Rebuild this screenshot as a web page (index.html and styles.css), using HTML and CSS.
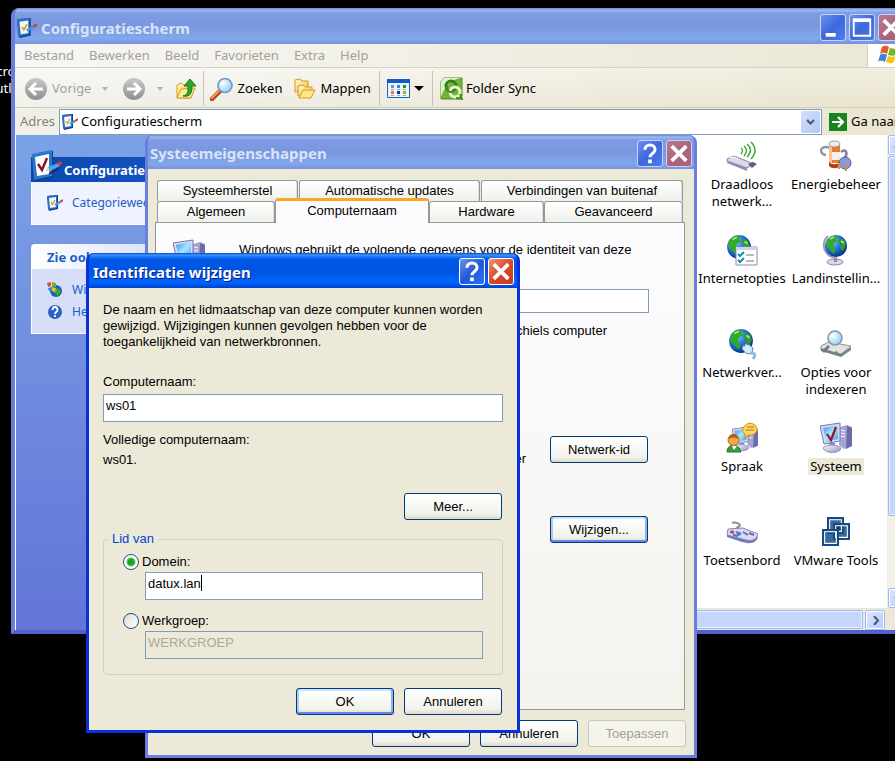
FILE: index.html
```html
<!DOCTYPE html>
<html lang="nl">
<head>
<meta charset="utf-8">
<title>Configuratiescherm</title>
<link rel="stylesheet" href="styles.css">
</head>
<body>
<svg class="defs" aria-hidden="true">
  <defs>
    <linearGradient id="screen" x1="0" y1="0" x2="1" y2="1"><stop offset="0" stop-color="#2f8fe8"/><stop offset=".5" stop-color="#a9e6ff"/><stop offset="1" stop-color="#3a9cf0"/></linearGradient>
    <linearGradient id="metal" x1="0" y1="0" x2="1" y2="1"><stop offset="0" stop-color="#fff"/><stop offset="1" stop-color="#8f8fc0"/></linearGradient>
    <linearGradient id="grey" x1="0" y1="0" x2="0" y2="1"><stop offset="0" stop-color="#c9c9c9"/><stop offset="1" stop-color="#8f8f8f"/></linearGradient>
    <linearGradient id="folder" x1="0" y1="0" x2="1" y2="1"><stop offset="0" stop-color="#fffbd0"/><stop offset="1" stop-color="#f2bf35"/></linearGradient>
    <radialGradient id="ocean" cx=".35" cy=".3" r=".8"><stop offset="0" stop-color="#7cc9ff"/><stop offset=".5" stop-color="#1c6fd8"/><stop offset="1" stop-color="#06246e"/></radialGradient>
    <radialGradient id="lens" cx=".35" cy=".35" r=".7"><stop offset="0" stop-color="#fff"/><stop offset="1" stop-color="#8fcdf5"/></radialGradient>
    <symbol id="panel" viewBox="0 0 32 32">
      <path d="M2 5 22 1v26L4 31z" fill="#0d3f82"/><path d="M1 4 21 0v26L3 30z" fill="#2d77c8"/><path d="M4 7l14-3v20L6 26z" fill="#fff"/>
      <path d="M7 14l4 6 5-12" fill="none" stroke="#8a1020" stroke-width="2.4"/>
      <path d="M15 21l2-4 10-4 2 3-10 5z" fill="#4aa3ee"/><path d="M26 13l4-2 1 3-3 2z" fill="#e33b25"/><path d="M15 21l2-4 2 4z" fill="#f6d796"/><path d="M18 24l10-6" stroke="#123" stroke-width="1.2"/>
    </symbol>
    <symbol id="panel-small" viewBox="0 0 16 16">
      <path d="M0 1l11-1v14L2 16z" fill="#0d3f82"/><path d="M0 1l10-1v13L1 15z" fill="#2d6fc0"/><path d="M2 3l7-1v10l-6 1z" fill="#f4f9ff"/><path d="M4 7l1.500 2.500L8 5" fill="none" stroke="#d8a21c" stroke-width="1.300"/>
      <path d="M8 10l5-3" stroke="#3f97e6" stroke-width="2.4"/><path d="M13 7l3-2" stroke="#c2452a" stroke-width="2"/>
    </symbol>
    <symbol id="globe" viewBox="0 0 24 24">
      <circle cx="12" cy="12" r="11" fill="url(#ocean)"/>
      <path d="M3 6c3-4 8-5 10-4l-1 3 2 2-4 2-1 3 3 3-2 5-4-4-4-4z" fill="#36a82a"/><path d="M16 4l4 2 2 5-3 6-3-3 1-4-3-2z" fill="#2f9c2b"/><path d="M6 5l4-2M17 7l3 2" stroke="#a5ea6b" stroke-width="1.6"/>
    </symbol>
    <symbol id="computer" viewBox="0 0 32 32">
      <path d="M20 5l7-2 5 2v19l-8 3-5-4z" fill="#a5a5d4"/><path d="M27 4l5 2v18l-6 3z" fill="#6c6ca8"/><path d="M21 8l4 1M21 11l4 1M21 14l4 1" stroke="#fff"/>
      <path d="M0 4l20-3v18L4 22z" fill="#d9d9f2" stroke="#7777aa"/><path d="M3 6l15-3v14L6 20z" fill="url(#screen)"/>
      <path d="M9 21h6v5H9z" fill="#8c8cc0"/><path d="M3 26c4-4 14-4 18 0-1 6-16 6-18 0z" fill="url(#metal)" stroke="#9292bb"/>
    </symbol>
    <symbol id="magnifier" viewBox="0 0 24 24">
      <path d="M2 22l8-8" stroke="#a7401e" stroke-width="4.5" stroke-linecap="round"/><path d="M2 21l7-7" stroke="#ff9447" stroke-width="2.2" stroke-linecap="round"/>
      <circle cx="15" cy="8.500" r="7" fill="url(#lens)" stroke="#6c97cf" stroke-width="1.6"/>
    </symbol>
    <symbol id="help-mark" viewBox="0 0 24 24"><path d="M6.500 8c0-7 11-7 11 0 0 4-5.500 4-5.500 8" fill="none" stroke="#fff" stroke-width="3.400"/><path d="M10 18.500h4v4h-4z" fill="#fff"/></symbol>
    <symbol id="close-mark" viewBox="0 0 24 24"><path d="M4 4l16 16M20 4L4 20" stroke="#fff" stroke-width="4"/></symbol>
    <symbol id="vm-square" viewBox="0 0 16 16"><path d="M1 1h14v14H1z" fill="none" stroke="#1c4a7c" stroke-width="2"/><path d="M2.500 2.500h11v11h-11z" fill="none" stroke="#fff"/></symbol>
  </defs>
</svg>

<div class="shortcut">Microsoft<br>Outlook</div>

<section class="window explorer" aria-label="Configuratiescherm">
  <header class="titlebar">
    <svg class="title-icon"><use href="#panel-small"/></svg>
    <h1>Configuratiescherm</h1>
    <button class="cap" aria-label="Minimaliseren"><svg viewBox="0 0 24 24"><path d="M4 18h11v4H4z" fill="#fff"/></svg></button>
    <button class="cap" aria-label="Maximaliseren"><svg viewBox="0 0 24 24"><path d="M2 2h20v20H2zM4 6v14h16V6z" fill="#fff" fill-rule="evenodd"/></svg></button>
    <button class="cap close" aria-label="Sluiten"><svg><use href="#close-mark"/></svg></button>
  </header>
  <div class="menurow">
    <nav class="menu"><button>Bestand</button><button>Bewerken</button><button>Beeld</button><button>Favorieten</button><button>Extra</button><button>Help</button></nav>
    <div class="flag"><svg viewBox="0 0 22 20"><path d="M5 2c3-2 5-1 7 0l-2 7c-2-1-4-2-7 0z" fill="#ee5a24"/><path d="M13 3c3 1 5 1 8 0l-2 7c-3 1-5 1-8 0z" fill="#74b62a"/><path d="M3 10c2-2 5-1 7 0l-2 7c-2-1-5-2-7 0z" fill="#3c86dc"/><path d="M11 11c3 1 5 1 7 0l-1 6c-3 2-6 1-8 0z" fill="#f8c21c"/></svg></div>
  </div>
  <div class="toolbar">
    <button class="tool off back"><svg class="i24" viewBox="0 0 24 24"><circle cx="12" cy="12" r="11" fill="url(#grey)"/><path d="M19 12H7M12 6l-6 6 6 6" fill="none" stroke="#fff" stroke-width="3"/></svg><span>Vorige</span><i class="arrow"></i></button>
    <button class="tool off forward" aria-label="Volgende"><svg class="i24" viewBox="0 0 24 24"><circle cx="12" cy="12" r="11" fill="url(#grey)"/><path d="M5 12h12M12 6l6 6-6 6" fill="none" stroke="#fff" stroke-width="3"/></svg><i class="arrow"></i></button>
    <button class="tool up" aria-label="Omhoog"><svg class="i22" viewBox="0 0 22 22"><path d="M2 7l4-2 3 2 6-1v14H2z" fill="url(#folder)" stroke="#d49c22"/><path d="M2 20l4-9 14-1-4 10z" fill="#ffe995" stroke="#d49c22"/><path d="M8 18c5-1 5-4 5-10H9l6-7 6 7h-4c0 8-2 11-9 10z" fill="#2da52b" stroke="#13801a"/></svg></button>
    <span class="rule"></span>
    <button class="tool search"><svg class="i24"><use href="#magnifier"/></svg><span>Zoeken</span></button>
    <button class="tool folders"><svg class="i22" viewBox="0 0 22 22"><path d="M1 2l5-1 2 2h6v11H1z" fill="url(#folder)" stroke="#d49c22"/><path d="M4 8l5-1 2 2h7v9H4z" fill="url(#folder)" stroke="#d49c22"/><path d="M5 20l4-8h12l-4 8z" fill="#ffe684" stroke="#d49c22"/></svg><span>Mappen</span></button>
    <span class="rule wide"></span>
    <button class="tool views" aria-label="Weergaven"><svg class="i23" viewBox="0 0 23 19"><path d="M.5.5h22v18H.5z" fill="#eaf4ff" stroke="#1665bf"/><path d="M0 0h23v4H0z" fill="#0c5dc6"/><path d="M4 6h3v3H4z" fill="#8f83bd"/><path d="M10 6h3v3h-3z" fill="#2386ec"/><path d="M16 6h3v3h-3z" fill="#16991d"/><path d="M4 12h3v3H4z" fill="#ff6e43"/><path d="M10 12h3v3h-3z" fill="#1138a0"/><path d="M16 12h3v3h-3z" fill="#d5a100"/><path d="M4 10.500h3M10 10.500h3M16 10.500h3M4 16.500h3M10 16.500h3M16 16.500h3" stroke="#9aa"/></svg><i class="arrow dark"></i></button>
    <span class="rule wide"></span>
    <button class="tool sync"><svg class="i23" viewBox="0 0 23 23"><path d="M1 4l3-3h18v18l-3 3H1z" fill="#77b237" stroke="#4d8d1b"/><path d="M1 20V4l3-3h17c-9 2-15 5-20 19z" fill="#e3f2cc"/><circle cx="11" cy="9" r="5" fill="none" stroke="#2f7f1c" stroke-width="3"/><circle cx="15" cy="15" r="5" fill="none" stroke="#e9f6d6" stroke-width="3"/><path d="M6 10a5 5 0 0 0 9 3M20 17l2 5-6-1" fill="none" stroke="#3f8f22" stroke-width="2"/></svg><span>Folder Sync</span></button>
  </div>
  <div class="address">
    <label for="adres">Adres</label>
    <div class="combo"><svg class="i16"><use href="#panel-small"/></svg><input id="adres" value="Configuratiescherm"><button class="drop" aria-label="Adreslijst"><svg viewBox="0 0 9 6"><path d="M1 1l3.500 3.500L8 1" fill="none" stroke="#41587f" stroke-width="2"/></svg></button></div>
    <button class="go"><svg viewBox="0 0 18 18"><path d="M0 0h18v18H0z" fill="#168521"/><path d="M3 9h10M9 4l5 5-5 5" fill="none" stroke="#fff" stroke-width="2.200"/></svg><span>Ga naar</span></button>
  </div>
  <div class="content">
    <aside class="tasks">
      <div class="task primary">
        <h2><svg class="i32"><use href="#panel"/></svg>Configuratiescherm</h2>
        <ul><li><svg class="i16"><use href="#panel-small"/></svg><a href="#">Categorieweergave</a></li></ul>
      </div>
      <div class="task">
        <h2>Zie ook</h2>
        <ul>
          <li><svg class="i16" viewBox="0 0 16 16"><circle cx="9" cy="9" r="6" fill="#1761c8"/><path d="M6 9l4-3 4 3-3 5z" fill="#3aab2b"/><path d="M0 1l4-1v4L1 5z" fill="#e64d20"/><path d="M5 0l4 1v4L5 4z" fill="#72b52b"/><path d="M1 6l4-1v4L2 9z" fill="#3686de"/><path d="M5 5l4 1-1 4-3-1z" fill="#f7bf16"/></svg><a href="#">Windows</a></li>
          <li><svg class="i16" viewBox="0 0 16 16"><circle cx="8" cy="8" r="7.500" fill="#2c62c8" stroke="#dce6f8"/><path d="M5.500 6c0-4 5-4 5 0 0 2-2.500 2-2.500 4M8 11v2" fill="none" stroke="#fff" stroke-width="1.800"/></svg><a href="#">Help</a></li>
        </ul>
      </div>
    </aside>
    <ul class="icons">
      <li><svg viewBox="0 0 32 32"><path d="M1 19l7-3 20 8-7 4-20-7z" fill="#dadaeb" stroke="#8888a6"/><path d="M1 21l20 7v3L1 23z" fill="#8f8fb2"/><path d="M22 24l5-2 4 2-5 4z" fill="#5f5f86"/><path d="M4 18l4-1 4 2" fill="none" stroke="#fff"/><path d="M15 8q3 2 0 6M18 6q5 4 0 10M21 4q7 6 0 13M25 2q8 8 0 17" fill="none" stroke="#3ba82b" stroke-width="1.400"/></svg><span>Draadloos netwerk...</span></li>
      <li><svg viewBox="0 0 32 32"><path d="M10 8C0 4-2 14 6 15" fill="none" stroke="#9292a6" stroke-width="2.500"/><path d="M9 4h11v19H9z" fill="#e87a2c"/><path d="M9 12h11v8H9z" fill="#f5f0ec"/><path d="M9 4h3v19H9z" fill="#ffc38a"/><ellipse cx="14.500" cy="4" rx="5.500" ry="3" fill="#eee" stroke="#999"/><path d="M9 22c3 3 8 3 11 0v4c-3 3-8 3-11 0z" fill="#b63b16"/><path d="M21 12c5-4 7 1 4 6" fill="none" stroke="#8181a8" stroke-width="2.500"/><circle cx="25" cy="23" r="6" fill="#8c98d8" stroke="#545c9c"/><path d="M19 23v6M26 25v6" stroke="#c99a26" stroke-width="2"/></svg><span>Energiebeheer</span></li>
      <li><svg viewBox="0 0 32 32"><use href="#globe" width="26" height="26"/><path d="M10 13h21v18H10z" fill="#fff" stroke="#8890a8"/><path d="M10 13h21v3H10z" fill="#cbd3e6"/><path d="M12 20l2 2 4-4M12 26l2 2 4-4" fill="none" stroke="#168cb8" stroke-width="2"/><path d="M20 21h8M20 27h8" stroke="#777"/></svg><span>Internetopties</span></li>
      <li><svg viewBox="0 0 32 32"><ellipse cx="15" cy="28" rx="8" ry="3" fill="#d8d8e8" stroke="#8888a4"/><path d="M14 23h3v5h-3z" fill="#9090ac"/><path d="M8 2C0 10 4 23 17 24" fill="none" stroke="#9c9cb8" stroke-width="2"/><use href="#globe" x="4" width="24" height="24"/></svg><span>Landinstellin...</span></li>
      <li><svg viewBox="0 0 32 32"><use href="#globe" x="2" width="26" height="26"/><path d="M17 18l4-3 6 5-1 5-5 1-5-5z" fill="#cfe8ff" stroke="#5e88bb"/><path d="M16 15l3 3M20 14l2 3" stroke="#667" stroke-width="1.500"/><path d="M24 25c8 0 4 4 3 6" fill="none" stroke="#90bcea" stroke-width="3"/></svg><span>Netwerkver...</span></li>
      <li><svg viewBox="0 0 32 32"><path d="M1 18l8-4 22 4-10 8-20-4z" fill="#e3e3e6" stroke="#929298"/><path d="M1 20l20 6v3L1 23zM21 26l10-7v3l-10 7z" fill="#7d7d85"/><path d="M15 24l3 1" stroke="#31c02c" stroke-width="2"/><path d="M9 18l-6 6" stroke="#77777c" stroke-width="3"/><circle cx="15" cy="10" r="7" fill="url(#lens)" stroke="#8c94a6" stroke-width="1.500"/></svg><span>Opties voor indexeren</span></li>
      <li><svg viewBox="0 0 32 32"><use href="#computer" x="6" y="4" width="26" height="26"/><path d="M1 30c0-9 12-9 14 0z" fill="#3b9d3e" stroke="#247329"/><path d="M6 24l2 4 3-4z" fill="#fff"/><circle cx="7.500" cy="18" r="5.500" fill="#f5a44b" stroke="#b36b19"/><path d="M3 17c0-7 10-6 9 0-4-2-5-2-9 0z" fill="#b85c1a"/><path d="M18 5c4-7 14-3 13 3-1 4-5 6-9 5l-3 4v-5c-3-2-3-4-1-7z" fill="#ffd462" stroke="#c78a1d"/><path d="M21 5h7M20 8h8" stroke="#b67813"/></svg><span>Spraak</span></li>
      <li class="selected"><svg viewBox="0 0 32 32"><use href="#computer" width="32" height="32"/><path d="M7 12l4 6 5-13" fill="none" stroke="#991224" stroke-width="2.200"/></svg><span>Systeem</span></li>
      <li><svg viewBox="0 0 32 32"><path d="M12 15c-5-4 5-4 1-7s-8 0-5-2" fill="none" stroke="#8b8b96" stroke-width="2"/><path d="M2 13l15-1 15 6c-2 8-9 7-16 5L1 19z" fill="#d9d9f7" stroke="#8585b2"/><path d="M1 19l15 4c7 2 14 3 16-4v2c-2 7-9 7-16 5L1 21z" fill="#7777b3"/><path d="M4 16l4 1M10 16l5 2M17 16l5 3M23 17l5 2M7 19l5 1" stroke="#6d6da0" stroke-width="2"/><path d="M5 15l3 1" stroke="#e84d32" stroke-width="2"/><path d="M11 18l3 1" stroke="#2386e6" stroke-width="2"/></svg><span>Toetsenbord</span></li>
      <li><svg viewBox="0 0 32 32"><path d="M8 2h15v15H8zM13 8h16v15H13zM3 14h15v15H3z" fill="#356aa3"/><path d="M14 9h8v8h-4v5h-4v-7z" fill="#123f78"/><use href="#vm-square" x="7" y="1" width="17" height="17"/><use href="#vm-square" x="13" y="7" width="17" height="17"/><use href="#vm-square" x="2" y="13" width="17" height="17"/></svg><span>VMware Tools</span></li>
    </ul>
    <div class="vscroll"><span class="sbtn"><svg viewBox="0 0 9 9"><path d="M1 7l3.500-4L8 7" fill="none" stroke="#41587f" stroke-width="2"/></svg></span><span class="thumb"></span><span class="sbtn"><svg viewBox="0 0 9 9"><path d="M1 3l3.500 4L8 3" fill="none" stroke="#41587f" stroke-width="2"/></svg></span></div>
    <div class="hscroll"><span class="thumb"></span><span class="sbtn"><svg viewBox="0 0 9 9"><path d="M3 0l4 4.500L3 9" fill="none" stroke="#41587f" stroke-width="2"/></svg></span></div>
  </div>
</section>

<section class="window dialog system" aria-label="Systeemeigenschappen">
  <header class="titlebar">
    <h1>Systeemeigenschappen</h1>
    <button class="cap" aria-label="Help"><svg><use href="#help-mark"/></svg></button>
    <button class="cap close" aria-label="Sluiten"><svg><use href="#close-mark"/></svg></button>
  </header>
  <div class="sheet">
    <div class="tabs top"><button>Systeemherstel</button><button>Automatische updates</button><button>Verbindingen van buitenaf</button></div>
    <div class="tabs bottom"><button>Algemeen</button><button class="active">Computernaam</button><button>Hardware</button><button>Geavanceerd</button></div>
    <div class="page">
      <div class="intro"><svg class="i32"><use href="#computer"/></svg><p>Windows gebruikt de volgende gegevens voor de identiteit van deze</p></div>
      <input class="field description" aria-label="Beschrijving van computer">
      <p class="example">Michiels computer</p>
      <div class="join"><p>computer</p><button class="btn">Netwerk-id</button></div>
      <div class="join change"><button class="btn default">Wijzigen...</button></div>
    </div>
    <footer class="actions"><button class="btn">OK</button><button class="btn">Annuleren</button><button class="btn" disabled>Toepassen</button></footer>
  </div>
</section>

<section class="window dialog identity" aria-label="Identificatie wijzigen">
  <header class="titlebar">
    <h1>Identificatie wijzigen</h1>
    <button class="cap" aria-label="Help"><svg><use href="#help-mark"/></svg></button>
    <button class="cap close" aria-label="Sluiten"><svg><use href="#close-mark"/></svg></button>
  </header>
  <form class="form">
    <p>De naam en het lidmaatschap van deze computer kunnen worden<br>gewijzigd. Wijzigingen kunnen gevolgen hebben voor de<br>toegankelijkheid van netwerkbronnen.</p>
    <label class="name-label" for="naam">Computernaam:</label>
    <input class="field" id="naam" value="ws01">
    <p class="full">Volledige computernaam:</p>
    <p class="full-value">ws01.</p>
    <div class="more"><button type="button" class="btn">Meer...</button></div>
    <fieldset>
      <legend>Lid van</legend>
      <label class="radio"><input type="radio" name="lid" checked>Domein:</label>
      <div class="entry"><input class="field" aria-label="Domein" value="datux.lan"><span class="caret"></span></div>
      <label class="radio"><input type="radio" name="lid">Werkgroep:</label>
      <div class="entry"><input class="field" aria-label="Werkgroep" value="WERKGROEP" disabled></div>
    </fieldset>
    <div class="actions"><button type="button" class="btn default">OK</button><button type="button" class="btn">Annuleren</button></div>
  </form>
</section>
</body>
</html>
```
FILE: styles.css
```css
:root {
  --ui: "Liberation Sans", Arial, sans-serif;
  --shell: "Noto Sans", Tahoma, sans-serif;
  --title: "Noto Sans", "Trebuchet MS", sans-serif;
  --face: #ece9d8;
}
* { box-sizing: border-box; }
html, body { height: 100%; }
body { margin: 0; position: relative; overflow: hidden; background: #000; font: 13px/16px var(--ui); color: #000; }
h1, h2, p, ul { margin: 0; padding: 0; }
ul { list-style: none; }
button, input { font: inherit; color: inherit; }
button { padding: 0; border: 0; background: none; }
svg { display: block; flex: none; }
.defs { position: absolute; width: 0; height: 0; }
.i16 { width: 16px; height: 16px; }
.i22 { width: 22px; height: 22px; }
.i23 { width: 23px; height: 23px; }
.i24 { width: 24px; height: 24px; }
.i32 { width: 32px; height: 32px; }

.shortcut { position: absolute; left: -19px; top: 63px; color: #fff; font: 13px/17px var(--shell); text-align: center; }

/* Windows */
.window { position: absolute; border: 4px solid #6a7ee0; border-top: 0; border-radius: 8px 8px 0 0; background: #7a96df; overflow: hidden; }
.titlebar { display: flex; align-items: center; gap: 3px; color: #d8e4f8; background: linear-gradient(#6684d8 0, #9db9f0 2px, #7e9ce4 5px, #7a96df 50%, #82a8ea 85%, #7a90de 100%); }
.titlebar h1 { flex: 1; font: bold 15px/20px var(--title); white-space: nowrap; }
.title-icon { width: 20px; height: 20px; margin: 0 1px 0 2px; }
.cap { width: 26px; height: 27px; padding: 1px; border: 1px solid #c6d4f6; border-radius: 3px; background: linear-gradient(135deg, #6d8ff0, #3d68dc 50%, #4b7df0); }
.cap svg { width: 22px; height: 23px; }
.cap.close { background: linear-gradient(135deg, #b9788d, #a9647c 60%, #b4607a); }

.explorer { left: 11px; right: -16px; top: 8px; display: flex; flex-direction: column; font: 13px/17px var(--shell); border-bottom-color: #5260cc; }
.explorer > .titlebar { height: 36px; padding: 3px 3px 0 0; }
.menurow { display: flex; height: 24px; border-bottom: 1px solid #d5d2bd; background: linear-gradient(90deg, #f6f6f6, #ebe7d4); }
.menu { flex: 1; display: flex; align-items: center; gap: 15px; padding-left: 9px; color: #a5a293; }
.flag { width: 40px; border-left: 1px solid #d5d2bd; background: #fff; padding: 1px 0 0 9px; }
.flag svg { width: 22px; height: 20px; }
.toolbar { display: flex; align-items: center; height: 40px; border-bottom: 1px solid #d0cdb8; padding: 2px 0 0 9px; background: linear-gradient(rgba(255,255,255,.3), rgba(225,220,195,.25)), linear-gradient(90deg, #f6f6f6, #ebe6d0); }
.tool { display: flex; align-items: center; gap: 4px; white-space: nowrap; }
.off { color: #a5a293; }
.arrow { border: 3px solid transparent; border-top: 4px solid #b5b2a2; border-bottom: 0; margin-left: 7px; }
.arrow.dark { border-width: 5px 5px 0; border-top-color: #000; margin-left: 0; }
.forward { margin-left: 14px; }
.up { margin-left: 12px; }
.rule { width: 1px; height: 35px; margin: 0 6px; background: #c9c5ad; }
.rule.wide { margin: 0 7px 0 8px; }
.search, .sync { gap: 3px; }
.folders { margin-left: 12px; }
.views .i23 { height: 19px; }
.address { display: flex; align-items: center; height: 27px; background: linear-gradient(90deg, #f0efe8, #ebe6d0); }
.address label { width: 44px; padding-left: 5px; color: #85827a; }
.combo { flex: 1; display: flex; align-items: center; height: 26px; padding: 1px 1px 1px 2px; border: 1px solid #7f9db9; background: #fff; }
.combo input { flex: 1; min-width: 0; padding: 0 3px; border: 0; background: none; outline: 0; }
.drop { width: 19px; height: 22px; border-radius: 2px; background: linear-gradient(135deg, #d2defc, #b3c8f8); }
.drop svg { width: 9px; height: 6px; margin: auto; }
.go { display: flex; align-items: center; gap: 4px; width: 85px; padding-left: 7px; white-space: nowrap; }
.go svg { width: 18px; height: 18px; }
.content { display: grid; grid-template: 473px 22px / 219px 1fr 20px; background: #fff; }
.tasks { grid-row: 1 / 3; padding: 22px 12px 0 15px; border-left: 1px solid #fff; background: linear-gradient(#7ba2e7, #6375d6); }
.task { margin-bottom: 19px; color: #215dc6; border-radius: 4px 4px 0 0; }
.task h2 { display: flex; align-items: center; height: 25px; padding-left: 16px; border-radius: 4px 4px 0 0; background: linear-gradient(90deg, #fff, #c6d3f7); font: bold 13px/16px var(--shell); white-space: nowrap; }
.task.primary h2 { gap: 1px; padding: 0; border-radius: 0; color: #fff; background: linear-gradient(90deg, #0a48b0, #1a57c8); }
.task.primary .i32 { margin-bottom: 8px; }
.task ul { display: grid; gap: 6px; padding: 13px 15px; border: 1px solid #fff; border-top: 0; background: #d6dff7; font-size: 12px; line-height: 16px; }
.task.primary ul { background: #eff3ff; }
.task li { display: flex; gap: 9px; white-space: nowrap; }
.task a { color: inherit; text-decoration: none; }
.icons { display: grid; grid-template-columns: 94px 94px; grid-auto-rows: 94px; justify-content: end; padding: 5px 4px 0 0; overflow: hidden; }
.icons li { display: flex; flex-direction: column; align-items: center; text-align: center; }
.icons svg { width: 32px; height: 32px; margin-bottom: 4px; }
.icons span { padding: 0 2px; }
.icons .selected span { background: var(--face); }
.vscroll { display: flex; flex-direction: column; gap: 1px; background: #f3f2ea; border-left: 1px solid #eeede5; }
.hscroll { grid-column: 2 / 4; display: flex; gap: 2px; padding: 1px 22px 1px 0; border-top: 1px solid #e8e6da; background: var(--face); }
.sbtn { display: grid; place-items: center; flex: none; width: 20px; height: 20px; border: 1px solid #9eb9f4; border-radius: 2px; background: linear-gradient(135deg, #dbe5ff, #b6cbfa); box-shadow: inset 0 0 0 1px #fff; }
.sbtn svg { width: 9px; height: 9px; }
.thumb { flex: 1; border: 1px solid #9eb9f4; border-radius: 2px; background: #c5d5fc; box-shadow: inset 0 0 0 1px #e9f0ff; }
.vscroll .thumb { margin-bottom: 71px; }

/* Dialogs */
.dialog { border-width: 0 3px 3px; }
.dialog > .titlebar { height: 34px; padding: 2px 2px 0; }
.system { left: 145px; top: 135px; width: 552px; }
.sheet { padding: 11px 8px; background: var(--face); }
.tabs { display: grid; padding: 0 2px 0 1px; }
.tabs.top { grid-template-columns: 141px 181px 202px; gap: 1px; }
.tabs.bottom { grid-template-columns: 118px 154px 115px 139px; }
.tabs button { height: 21px; border: 1px solid #919b9c; border-bottom: 0; border-radius: 3px 3px 0 0; background: linear-gradient(#fff, #f0f0ea); box-shadow: inset -1px 0 0 #d8e0e4; }
.tabs .active { height: 25px; margin: -3px 0 -1px; padding-bottom: 3px; border-top: 3px solid #f9a825; background: #fcfcfe; position: relative; box-shadow: none; }
.page { height: 488px; margin: 0 1px 0 -1px; padding: 16px 35px 0 17px; border: 1px solid #919b9c; background: linear-gradient(#fcfcfe, #f4f3ee); }
.intro { display: flex; gap: 34px; }
.intro p { padding-top: 3px; white-space: nowrap; }
.description { display: block; width: 272px; margin: 18px 0 0 auto; }
.page .description { height: 24px; }
.example { margin: 10px 42px 0 0; text-align: right; }
.join { display: flex; justify-content: flex-end; gap: 24px; margin: 97px 1px 0 0; }
.join p { padding-top: 15px; }
.join.change { margin-top: 49px; }
.btn { width: 98px; height: 27px; border: 1px solid #003c74; border-radius: 3px; background: linear-gradient(#fff, #f2f2ec 80%, #dcd8cc); text-align: center; }
.btn.default { box-shadow: inset 0 -2px 0 #6982ee, inset 2px 0 0 #b0c8f4, inset -2px 0 0 #8fb0ee, inset 0 2px 0 #cee4ff; }
.btn:disabled { border-color: #c9c7ba; background: #f5f4ea; color: #a1a192; }
.actions { display: flex; justify-content: flex-end; gap: 10px; }
.sheet .actions { padding-top: 10px; margin-bottom: -3px; }
.field { width: 100%; height: 28px; padding: 2px 2px 8px; border: 1px solid #7f9db9; border-radius: 0; background: #fff; outline: 0; }
.field:disabled { background: var(--face); color: #aca899; }

.identity { left: 86px; top: 253px; width: 434px; border-color: #0831d9; background: #0054e3; }
.identity > .titlebar { height: 35px; padding: 2px 3px 0 4px; color: #fff; text-shadow: 1px 1px 0 #0a1883; background: linear-gradient(#0848d0 0, #3a93ff 2px, #0058e8 6px, #0053e1 50%, #0066ff 85%, #0040c8 100%); }
.identity .cap { border-color: #fff; background: linear-gradient(135deg, #6b95f2, #2358d8 50%, #2f74f5); }
.identity .cap.close { background: linear-gradient(135deg, #ef9474, #d9482a 50%, #c83c18); }
.form { padding: 14px 14px 0; background: var(--face); }
.name-label { display: block; margin: 24px 0 4px; }
.full { margin-top: 10px; }
.full-value { margin-top: 4px; }
.more { display: flex; justify-content: flex-end; margin: 25px 1px 11px 0; }
fieldset { margin: 0; padding: 7px 19px 15px; border: 1px solid #d0d0bf; border-radius: 4px; }
legend { margin-left: -15px; padding: 0 4px; color: #0046d5; }
.radio { display: flex; align-items: center; gap: 3px; height: 16px; margin-bottom: 2px; }
.radio input { appearance: none; width: 16px; height: 16px; margin: 0; border: 1px solid #1d5281; border-radius: 50%; background: linear-gradient(135deg, #dcdcd7, #fff); }
.radio input:checked { background: radial-gradient(circle, #21a121 0 3px, #55d551 4px, #fff 5px); }
.entry { position: relative; margin: 0 0 13px 22px; }
.entry:last-child { margin-bottom: 0; }
.caret { position: absolute; left: 56px; top: 3px; width: 1px; height: 16px; background: #000; }
.form .actions { padding: 13px 1px 15px 0; }
```
